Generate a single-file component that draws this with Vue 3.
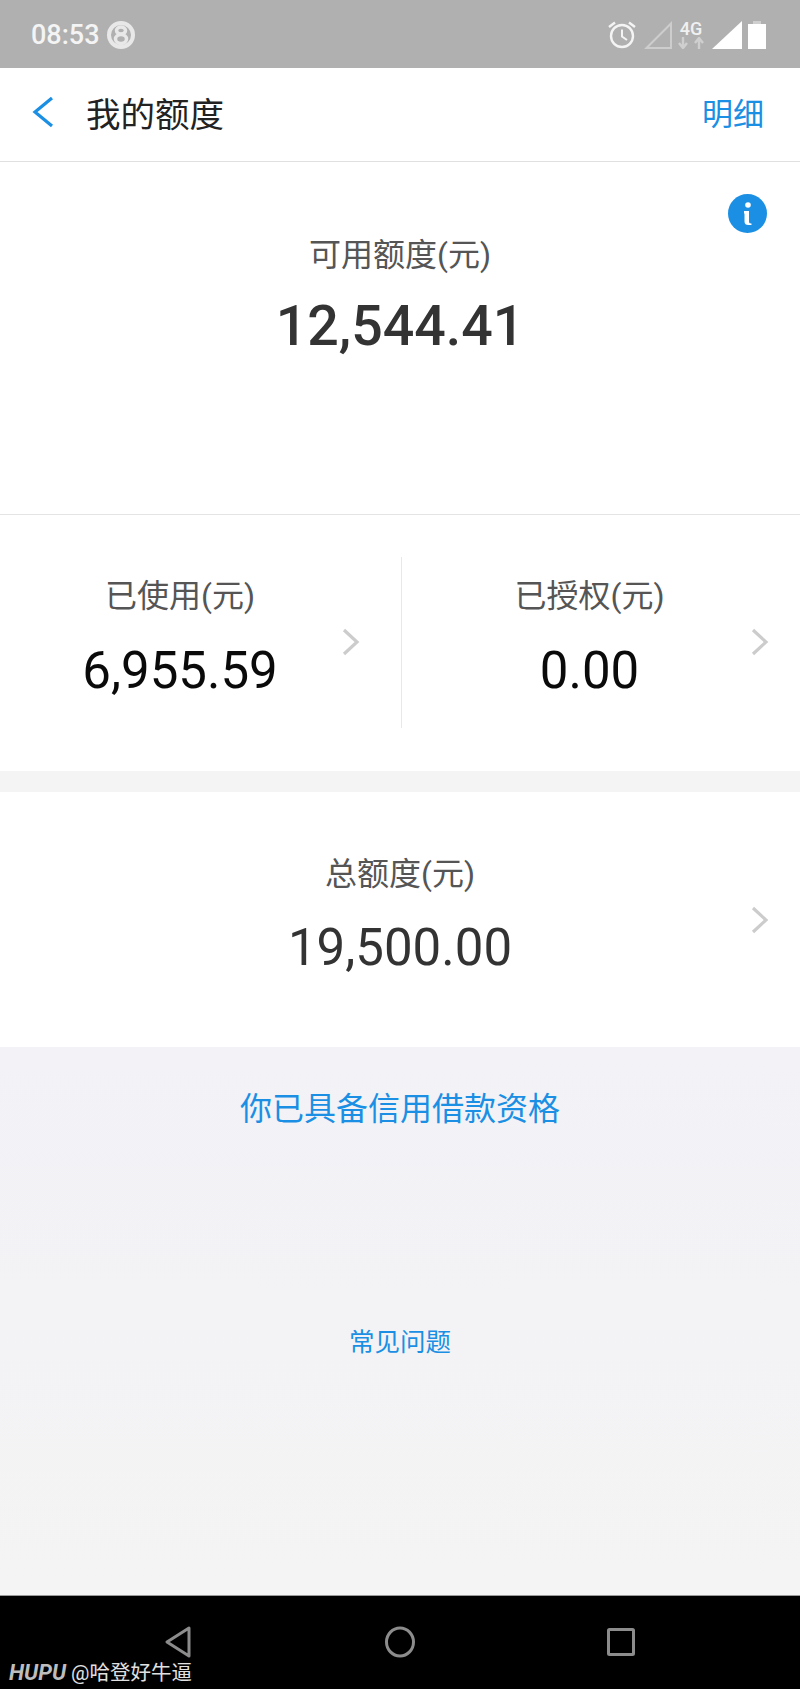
<template>
  <div class="page">
    <div class="status">
      <div class="status-left">
        <span class="time">08:53</span>
        <svg class="notif" width="30" height="30" viewBox="0 0 30 30" fill="none" stroke="#e8e8e8">
          <circle cx="15" cy="15" r="12" stroke-width="4" />
          <ellipse cx="15" cy="10.500" rx="4.500" ry="3.500" stroke-width="3.500" />
          <ellipse cx="15" cy="19" rx="5.500" ry="4.500" stroke-width="3.500" />
        </svg>
      </div>
      <div class="status-right">
        <svg class="st-alarm" width="28" height="29" viewBox="0 0 28 29" fill="none" stroke="#f4f4f4">
          <circle cx="14" cy="16" r="11" stroke-width="2.400" />
          <path d="M14 9.500v7l5 3.500" stroke-width="2" />
          <path d="M1 7 7 2.500M27 7 21 2.500" stroke-width="2.400" />
        </svg>
        <svg class="st-sim" width="28" height="28" viewBox="0 0 28 28" fill="none">
          <path d="M2.500 27 27 2.500V27Z" stroke="#cdcdcd" stroke-width="2" />
        </svg>
        <div class="net">
          <span class="net-label">4G</span>
          <svg width="26" height="12" viewBox="0 0 26 12" fill="none" stroke="#cfcfcf" stroke-width="2.400">
            <path d="M5 0v10M1 6 5 11 9 6" />
            <path d="M21 12V2M17 6 21 1 25 6" />
          </svg>
        </div>
        <svg class="st-bars" width="30" height="28" viewBox="0 0 30 28"><path d="M0 28 30 0V28Z" fill="#fff" /></svg>
        <svg class="st-batt" width="18" height="28" viewBox="0 0 18 28">
          <path d="M5 0h8v3H5Z" fill="#cfcfcf" />
          <path d="M0 3h18v25H0Z" fill="#fff" />
        </svg>
      </div>
    </div>

    <div class="nav">
      <svg class="back" width="22" height="32" viewBox="0 0 22 32" fill="none">
        <path d="M20 2 3 16 20 30" stroke="#1a8fe3" stroke-width="3.200" />
      </svg>
      <span class="nav-title">我的额度</span>
      <span class="nav-link">明细</span>
    </div>

    <div class="avail">
      <svg class="info" width="39" height="39" viewBox="0 0 39 39">
        <circle cx="19.500" cy="19.500" r="19.500" fill="#1a8fe3" />
        <circle cx="20" cy="11" r="2.800" fill="#fff" />
        <path d="M16 17h5v11q0 1.500 2.500 1.500V31h-3q-4 0-4-3.500V19.500h-.5Z" fill="#fff" />
      </svg>
      <p class="label">可用额度(元)</p>
      <p class="avail-num">12,544.41</p>
    </div>

    <div class="split">
      <div v-for="item in splitItems" :key="item.label" class="cell">
        <p class="label">{{ item.label }}</p>
        <p class="num">{{ item.value }}</p>
        <svg class="arrow" width="18" height="28" viewBox="0 0 18 28" fill="none">
          <path d="M2 2 15 14 2 26" stroke="#cccccc" stroke-width="3.200" />
        </svg>
      </div>
    </div>

    <div class="gap"></div>

    <div class="total">
      <p class="label">总额度(元)</p>
      <p class="num total-num">19,500.00</p>
      <svg class="arrow" width="18" height="28" viewBox="0 0 18 28" fill="none">
        <path d="M2 2 15 14 2 26" stroke="#cccccc" stroke-width="3.200" />
      </svg>
    </div>

    <div class="bottom">
      <p class="qualify">你已具备信用借款资格</p>
      <p class="faq">常见问题</p>
    </div>

    <div class="sysbar">
      <svg width="26" height="32" viewBox="0 0 26 32" fill="none" stroke="#8c8c8c" stroke-width="3">
        <path d="M24 2V30L2 16Z" stroke-linejoin="round" />
      </svg>
      <svg width="30" height="32" viewBox="0 0 30 32" fill="none" stroke="#8c8c8c" stroke-width="3">
        <ellipse cx="15" cy="16" rx="13.500" ry="14" />
      </svg>
      <svg width="28" height="28" viewBox="0 0 28 28" fill="none" stroke="#8c8c8c" stroke-width="3">
        <rect x="1.500" y="1.500" width="25" height="25" rx="1" />
      </svg>
      <div class="watermark"><span class="hupu">HUPU</span> @哈登好牛逼</div>
    </div>
  </div>
</template>

<script setup>
const splitItems = [
  { label: '已使用(元)', value: '6,955.59' },
  { label: '已授权(元)', value: '0.00' }
]
</script>

<style>
html, body { margin: 0; background: #fff; }
</style>

<style scoped>
.page {
  width: 800px;
  height: 1689px;
  display: flex;
  flex-direction: column;
  font-family: Roboto, "Noto Sans CJK SC", sans-serif;
  overflow: hidden;
}
p { margin: 0; }

.status {
  height: 68px;
  flex: none;
  background: #b0b0b0;
  display: flex;
  justify-content: space-between;
  align-items: center;
  padding: 0 34px 0 31px;
}
.status-left, .status-right { display: flex; align-items: center; }
.status-left { margin-top: 1px; }
.time { color: #f4f4f4; font-size: 27px; font-weight: 500; }
.notif { margin-left: 6px; }
.status-right { margin-top: 1px; }
.st-sim { margin-left: 8px; }
.net { width: 26px; margin-left: 6px; display: flex; flex-direction: column; align-items: center; color: #f0f0f0; }
.net-label { font-size: 18px; font-weight: 500; line-height: 17px; }
.st-bars { margin-left: 8px; }
.st-batt { margin-left: 6px; }

.nav {
  height: 87px;
  flex: none;
  display: flex;
  align-items: center;
  background: #fff;
  border-bottom: 1px solid #e0e0e0;
  padding: 0 36px 6px 32px;
}
.back { flex: none; }
.nav-title { margin-left: 32px; font-size: 34.500px; color: #222; }
.nav-link { margin-left: auto; font-size: 31px; color: #1a8fe3; }

.avail {
  position: relative;
  height: 353px;
  flex: none;
  box-sizing: border-box;
  padding-top: 72px;
  text-align: center;
  background: #fff;
  border-bottom: 1px solid #e4e4e4;
}
.info { position: absolute; top: 32px; right: 33px; }
.label { font-size: 32px; line-height: 40px; color: #555; }
.avail .label { margin-top: 1px; }
.avail-num { margin-top: 17px; font-size: 55.500px; line-height: 70px; font-weight: 500; color: #333; }

.split {
  height: 256px;
  flex: none;
  display: flex;
  background: #fff;
  padding: 42px 0 43px;
  box-sizing: border-box;
}
.cell {
  position: relative;
  box-sizing: border-box;
  padding-top: 19px;
  text-align: center;
}
.cell:first-child { width: 402px; border-right: 1px solid #e8e8e8; padding-right: 41px; }
.cell:last-child { width: 398px; padding-right: 23px; }
.cell:first-child .arrow { right: 41px; }
.cell .num { margin-top: 25px; }
.num { margin-top: 24px; font-size: 51px; line-height: 60px; color: #0a0a0a; }
.arrow { position: absolute; right: 31px; top: 71px; }

.gap { height: 21px; flex: none; background: #f4f4f4; }

.total {
  position: relative;
  height: 255px;
  flex: none;
  box-sizing: border-box;
  padding-top: 62px;
  text-align: center;
  background: #fff;
}
.total .arrow { top: 114px; }
.total-num { color: #333; }

.bottom {
  flex: 1;
  text-align: center;
  background: linear-gradient(#f2f2f7, #f4f4f4);
  border-bottom: 1px solid #999;
}
.qualify { margin-top: 40px; font-size: 32px; line-height: 44px; color: #1a8fe3; }
.faq { margin-top: 194px; font-size: 25.500px; line-height: 34px; color: #1a8fe3; }

.sysbar {
  position: relative;
  height: 93px;
  flex: none;
  background: #000;
  display: flex;
  align-items: flex-start;
  padding-top: 30px;
  box-sizing: border-box;
}
.sysbar svg:nth-child(1) { margin-left: 165px; }
.sysbar svg:nth-child(2) { margin-left: 194px; }
.sysbar svg:nth-child(3) { margin-left: 192px; margin-top: 2px; }
.watermark {
  position: absolute;
  left: 9px;
  bottom: 3px;
  font-size: 20.500px;
  line-height: 26px;
  color: #e0e0e0;
}
.hupu { font-style: italic; font-weight: 700; font-size: 22px; color: #bdbdbd; }
</style>
